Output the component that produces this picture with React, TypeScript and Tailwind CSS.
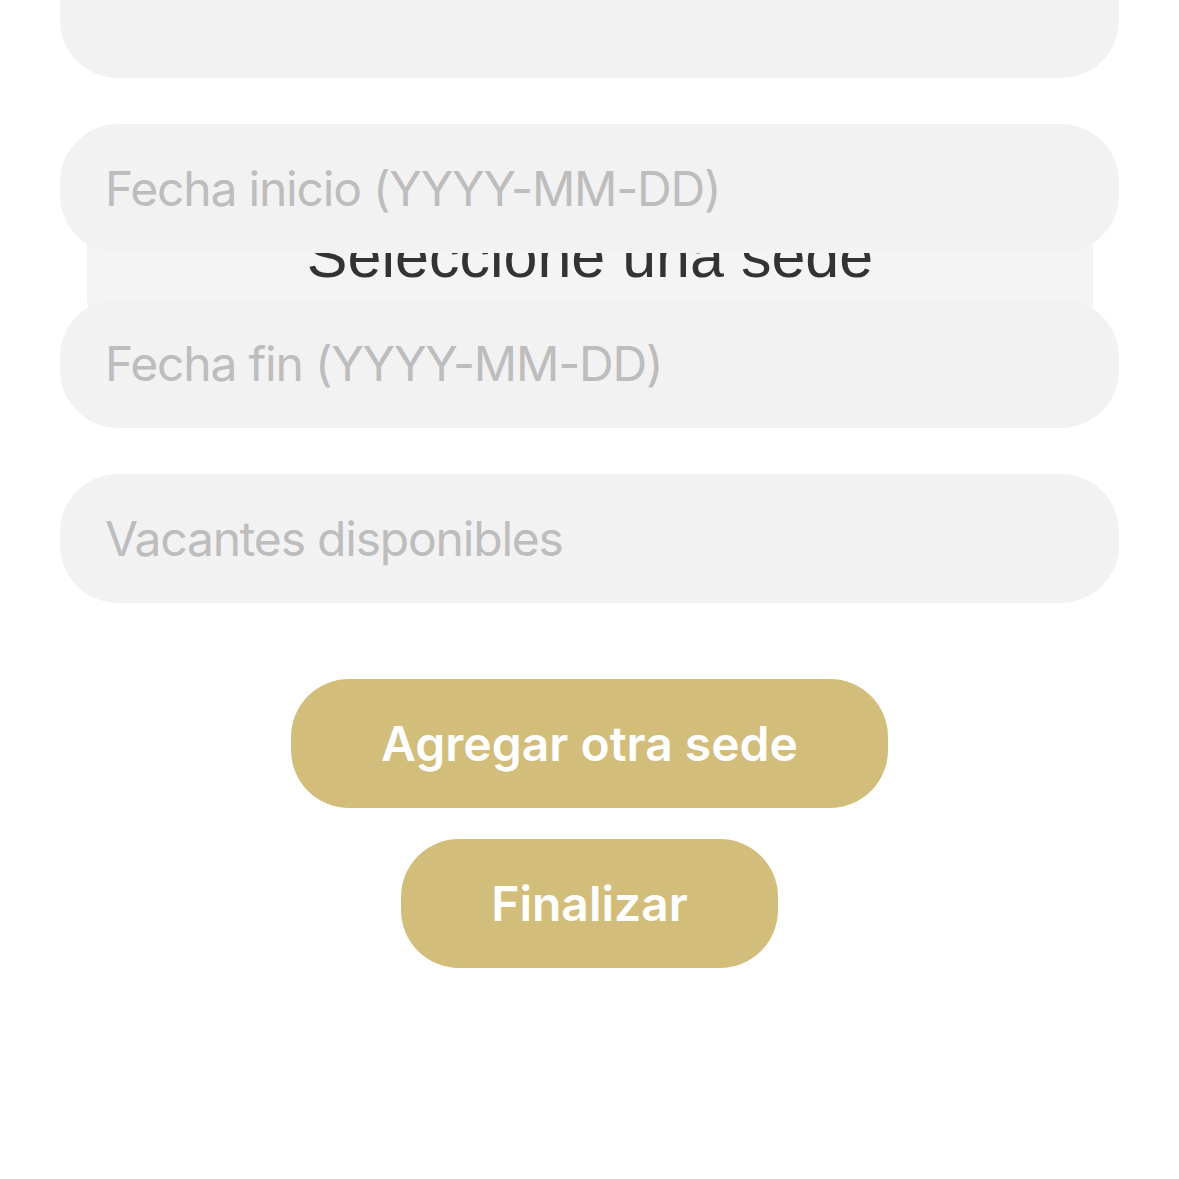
import React from "react";

const inputs = [
  { label: "" },
  { label: "Fecha inicio (YYYY-MM-DD)" },
  { label: "Fecha fin (YYYY-MM-DD)" },
  { label: "Vacantes disponibles" },
];

const App = () => {
  return (
    <div
      className="min-h-[1179px] overflow-hidden bg-white px-[60px]"
      style={{ fontFamily: "Inter, 'Noto Sans', sans-serif" }}
    >
      <div className="relative -mt-[51px] flex flex-col gap-[46px]">
        {/* picker sitting behind the fields */}
        <div className="absolute left-[27px] right-[26px] top-[251px] z-0 h-[112px] rounded-[10px] bg-[#f4f4f4] pt-[26px] text-center">
          <span
            className="text-[61px] leading-[60px] text-[#333333]"
            style={{ fontFamily: "'Liberation Sans', Arial, sans-serif" }}
          >
            Seleccione una sede
          </span>
        </div>

        {inputs.map((item, i) => (
          <div
            key={i}
            className="relative z-10 flex h-[129px] items-center rounded-[58px] bg-[#f2f2f2] pl-[45px]"
          >
            <span className="text-[48px] tracking-[-1.2px] text-[#bdbdbd]">{item.label}</span>
          </div>
        ))}
      </div>

      <div className="mt-[76px] flex flex-col items-center gap-[31px]">
        <button
          type="button"
          className="flex h-[129px] items-center rounded-[58px] bg-[#d2bd7b] px-[90px] text-[48px] font-semibold text-white"
        >
          Agregar otra sede
        </button>
        <button
          type="button"
          className="flex h-[129px] items-center rounded-[58px] bg-[#d2bd7b] px-[90px] text-[48px] font-semibold text-white"
        >
          Finalizar
        </button>
      </div>
    </div>
  );
};

export default App;
